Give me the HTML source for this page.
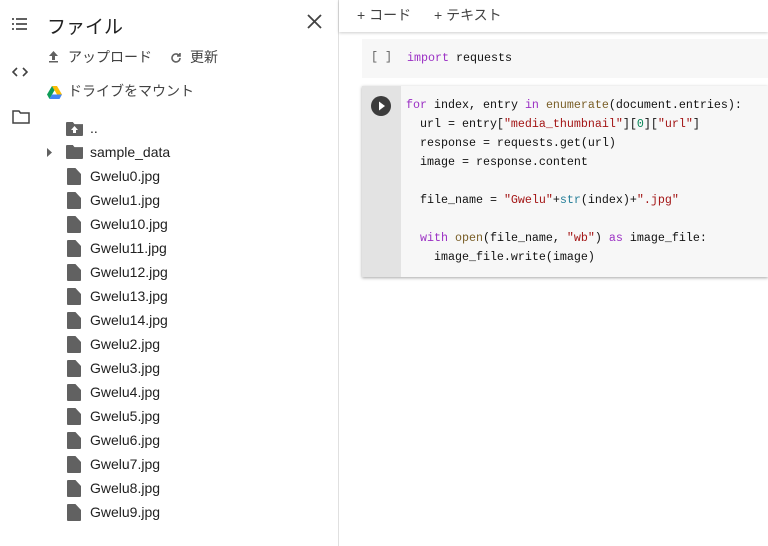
<!DOCTYPE html>
<html><head><meta charset="utf-8"><style>
body{margin:0;width:768px;height:546px;background:#fff;font-family:"Liberation Sans","Noto Sans CJK JP",sans-serif;color:#212121;position:relative;overflow:hidden}
.a{position:absolute}
.side{left:0;top:0;width:338px;height:546px;border-right:1px solid #e0e0e0}
.row{position:absolute;left:90px;font-size:14px;color:#212121}
.fi{position:absolute;left:67px;width:14px;height:17px;background:#616161;clip-path:polygon(0 0,60% 0,100% 35%,100% 100%,0 100%);border-radius:1px}
.code{font-family:"Liberation Mono","Noto Sans CJK JP",monospace;font-size:11.67px;white-space:pre;line-height:19px;color:#111}
.k{color:#9b30c4}.b{color:#795e26}.s{color:#a31515}.n{color:#098658}.t{color:#267f99}
</style></head><body>
<div class="a side"></div>
<svg class="a" style="left:12px;top:17px" width="16" height="14" viewBox="0 0 16 14" fill="#616161"><rect x="0" y="1" width="2" height="2"/><rect x="4" y="1" width="11" height="2"/><rect x="0" y="6" width="2" height="2"/><rect x="4" y="6" width="11" height="2"/><rect x="0" y="11" width="2" height="2"/><rect x="4" y="11" width="11" height="2"/></svg>
<svg class="a" style="left:12px;top:66px" width="16" height="12" viewBox="0 0 16 12" fill="none" stroke="#424242" stroke-width="1.6"><path d="M5 2 1 6 5 10M11 2 15 6 11 10"/></svg>
<svg class="a" style="left:12px;top:110px" width="18" height="14" viewBox="0 0 18 14" fill="none" stroke="#424242" stroke-width="1.5"><path d="M1 1h6l1.5 2H17v10H1z"/></svg>
<div class="a" style="left:47px;top:12px;font-size:19px;color:#212121">ファイル</div>
<svg class="a" style="left:307px;top:14px" width="15" height="15" viewBox="0 0 15 15" stroke="#424242" stroke-width="1.8"><path d="M1 1 14 14M14 1 1 14"/></svg>
<svg class="a" style="left:48px;top:51px" width="11" height="12" viewBox="0 0 11 12" fill="#616161"><path d="M5.5 0 10 5H7v4H4V5H1z"/><rect x="1" y="10" width="9" height="1.5"/></svg>
<div class="a" style="left:68px;top:47px;font-size:14px;color:#424242">アップロード</div>
<svg class="a" style="left:170px;top:52px" width="12" height="12" viewBox="0 0 12 12" fill="none" stroke="#616161" stroke-width="1.6"><path d="M10 6a4 4 0 1 1-1.2-2.9"/><path d="M10 1v3H7" fill="#616161"/></svg>
<div class="a" style="left:190px;top:47px;font-size:14px;color:#424242">更新</div>
<svg class="a" style="left:47px;top:86px" width="15" height="13" viewBox="0 0 15 13"><path d="M5 0h5l5 8.5h-5z" fill="#fbbc04"/><path d="M5 0 0 8.5 2.5 13 7.5 4.3z" fill="#0f9d58"/><path d="M2.5 13h10L15 8.5H5z" fill="#4285f4"/></svg>
<div class="a" style="left:68px;top:81px;font-size:14px;color:#424242">ドライブをマウント</div>
<div class="a" style="left:66px;top:122px;width:17px;height:14px;background:#616161;border-radius:1px;clip-path:polygon(0 0,40% 0,50% 15%,100% 15%,100% 100%,0 100%)"></div>
<svg class="a" style="left:70px;top:125px" width="9" height="9" viewBox="0 0 9 9" fill="#fff"><path d="M4.5 1 8 5H6v3H3V5H1z"/></svg>
<div class="row" style="top:120px">..</div>
<svg class="a" style="left:47px;top:148px" width="6" height="9" viewBox="0 0 6 9" fill="#616161"><path d="M0 0 5 4.5 0 9z"/></svg>
<div class="a" style="left:66px;top:145px;width:17px;height:14px;background:#616161;border-radius:1px;clip-path:polygon(0 0,40% 0,50% 15%,100% 15%,100% 100%,0 100%)"></div>
<div class="row" style="top:144px">sample_data</div>
<div class="fi" style="top:168px"></div><div class="row" style="top:168px">Gwelu0.jpg</div>
<div class="fi" style="top:192px"></div><div class="row" style="top:192px">Gwelu1.jpg</div>
<div class="fi" style="top:216px"></div><div class="row" style="top:216px">Gwelu10.jpg</div>
<div class="fi" style="top:240px"></div><div class="row" style="top:240px">Gwelu11.jpg</div>
<div class="fi" style="top:264px"></div><div class="row" style="top:264px">Gwelu12.jpg</div>
<div class="fi" style="top:288px"></div><div class="row" style="top:288px">Gwelu13.jpg</div>
<div class="fi" style="top:312px"></div><div class="row" style="top:312px">Gwelu14.jpg</div>
<div class="fi" style="top:336px"></div><div class="row" style="top:336px">Gwelu2.jpg</div>
<div class="fi" style="top:360px"></div><div class="row" style="top:360px">Gwelu3.jpg</div>
<div class="fi" style="top:384px"></div><div class="row" style="top:384px">Gwelu4.jpg</div>
<div class="fi" style="top:408px"></div><div class="row" style="top:408px">Gwelu5.jpg</div>
<div class="fi" style="top:432px"></div><div class="row" style="top:432px">Gwelu6.jpg</div>
<div class="fi" style="top:456px"></div><div class="row" style="top:456px">Gwelu7.jpg</div>
<div class="fi" style="top:480px"></div><div class="row" style="top:480px">Gwelu8.jpg</div>
<div class="fi" style="top:504px"></div><div class="row" style="top:504px">Gwelu9.jpg</div>
<div class="a" style="left:339px;top:0;width:429px;height:32px;background:#fff;box-shadow:0 1px 3px rgba(0,0,0,.2)"></div>
<div class="a" style="left:357px;top:5px;font-size:14px;color:#424242">+ コード</div>
<div class="a" style="left:434px;top:5px;font-size:14px;color:#424242">+ テキスト</div>
<div class="a" style="left:362px;top:39px;width:406px;height:39px;background:#f7f7f7"></div>
<div class="a code" style="left:371px;top:48px;color:#616161">[ ]</div>
<div class="a code" style="left:407px;top:49px"><span class="k">import</span> requests</div>
<div class="a" style="left:362px;top:86px;width:406px;height:191px;background:#f7f7f7;box-shadow:0 1px 3px rgba(0,0,0,.35)"></div>
<div class="a" style="left:362px;top:86px;width:39px;height:191px;background:#e3e3e3"></div>
<svg class="a" style="left:371px;top:96px" width="20" height="20" viewBox="0 0 20 20"><circle cx="10" cy="10" r="10" fill="#3c3c3c"/><path d="M8 5.5 14 10 8 14.5z" fill="#fff"/></svg>
<div class="a code" style="left:406px;top:96px"><span class="k">for</span> index, entry <span class="k">in</span> <span class="b">enumerate</span>(document.entries):
  url = entry[<span class="s">"media_thumbnail"</span>][<span class="n">0</span>][<span class="s">"url"</span>]
  response = requests.get(url)
  image = response.content

  file_name = <span class="s">"Gwelu"</span>+<span class="t">str</span>(index)+<span class="s">".jpg"</span>

  <span class="k">with</span> <span class="b">open</span>(file_name, <span class="s">"wb"</span>) <span class="k">as</span> image_file:
    image_file.write(image)</div>
</body></html>
